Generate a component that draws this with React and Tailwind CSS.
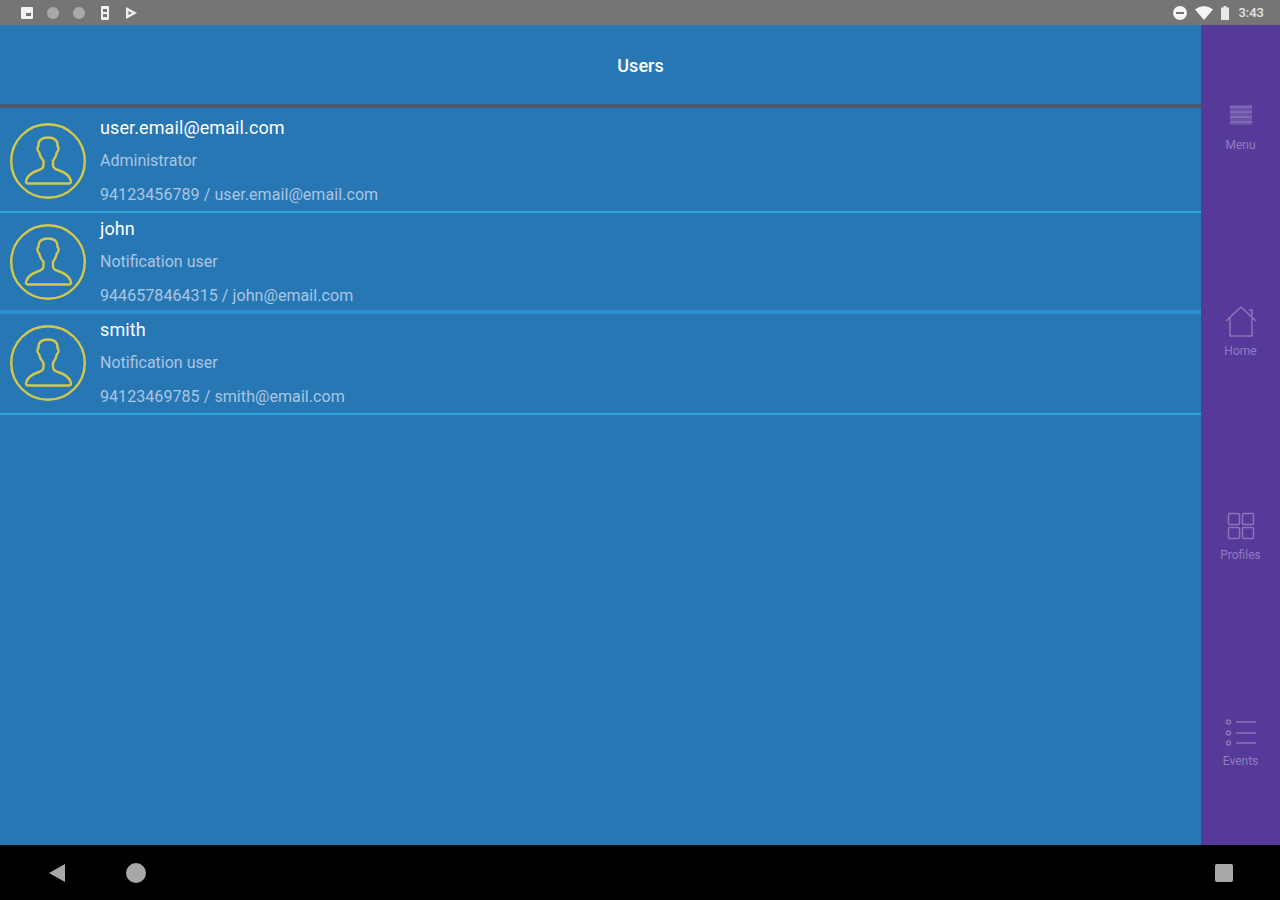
const users = [
  { name: 'user.email@email.com', role: 'Administrator', contact: '94123456789 / user.email@email.com', line: 'border-b-[2px] border-[#2fa3dc]' },
  { name: 'john', role: 'Notification user', contact: '9446578464315 / john@email.com', line: 'border-b-[4px] border-[#2b8fd0]' },
  { name: 'smith', role: 'Notification user', contact: '94123469785 / smith@email.com', line: 'border-b-[2px] border-[#2fa3dc]' },
];

const Avatar = () => (
  <svg width="76" height="78" viewBox="0 0 76 78" fill="none" stroke="#d4c84a" strokeWidth="2.400" className="shrink-0">
    <circle cx="38" cy="39" r="36.800" />
    <path
      d="M18 61.500C16 61.500 15.500 60 16.500 57.500C18 53 23 50 29 48C32 47 33.500 45.500 33.500 43L33.500 39C31 36 29.500 33 29 30C27 29 27 25 28.500 24C28 18 32 15.500 38 15.500C44 15.500 48 18 47.500 24C49 25 49 29 47 30C46.500 33 45 36 43 39L43 43C43 45.500 44.500 47 48 48C54 50 59 53 60.500 57.500C61.500 60 61 61.500 59 61.500Z"
      strokeLinejoin="round"
    />
  </svg>
);

const MenuIcon = () => (
  <svg width="22" height="20" viewBox="0 0 22 20" fill="none">
    <rect width="22" height="20" fill="#6a53a8" />
    <path d="M0 2h22M0 7h22M0 12h22M0 17h22" stroke="#7f6ab3" strokeWidth="2" />
  </svg>
);

const HomeIcon = () => (
  <svg width="32" height="32" viewBox="0 0 32 32" fill="none" stroke="#8a75b8" strokeWidth="1.500">
    <path d="M1 15 16 1l15 14M5 12v18h22V12M24 4h3v6" />
  </svg>
);

const ProfilesIcon = () => (
  <svg width="28" height="28" viewBox="0 0 28 28" fill="none" stroke="#8a75b8" strokeWidth="1.500">
    <rect x="1.500" y="1.500" width="11" height="11" rx="1" />
    <rect x="15.500" y="1.500" width="11" height="11" rx="1" />
    <rect x="1.500" y="15.500" width="11" height="11" rx="1" />
    <rect x="15.500" y="15.500" width="11" height="11" rx="1" />
  </svg>
);

const EventsIcon = () => (
  <svg width="32" height="30" viewBox="0 0 32 30" fill="none" stroke="#8a75b8" strokeWidth="1.500">
    <circle cx="3.500" cy="4" r="2" />
    <circle cx="3.500" cy="15" r="2" />
    <circle cx="3.500" cy="25" r="2" />
    <path d="M11 4h20M11 15h20M11 25h20" />
  </svg>
);

const navItems = [
  { label: 'Menu', icon: <MenuIcon />, box: 'h-[205px] pt-[74px]', gap: 'mt-[6px]' },
  { label: 'Home', icon: <HomeIcon />, box: 'h-[205px] pt-[76px]', gap: 'mt-[5px]' },
  { label: 'Profiles', icon: <ProfilesIcon />, box: 'h-[205px] pt-[75px]', gap: 'mt-[5px]' },
  { label: 'Events', icon: <EventsIcon />, box: 'h-[205px] pt-[77px]', gap: 'mt-[4px]' },
];

export default function App() {
  return (
    <div className="w-[1280px] h-[900px] flex flex-col overflow-hidden bg-black font-['Roboto',sans-serif]">
      {/* status bar */}
      <div className="h-[25px] shrink-0 bg-[#757575] flex items-center justify-between pl-[20px] pr-[16px]">
        <div className="flex items-center gap-[12px]">
          <svg width="14" height="14" viewBox="0 0 14 14"><rect x="1" y="1" width="12" height="12" rx="1" fill="#f2f2f2" /><rect x="6" y="7" width="5" height="3" fill="#757575" /></svg>
          <svg width="14" height="14" viewBox="0 0 14 14"><circle cx="7" cy="7" r="6" fill="#a8a8a8" /></svg>
          <svg width="14" height="14" viewBox="0 0 14 14"><circle cx="7" cy="7" r="6" fill="#a8a8a8" /></svg>
          <svg width="14" height="16" viewBox="0 0 14 16"><rect x="3" y="1" width="8" height="14" rx="1" fill="#f2f2f2" /><rect x="5" y="4" width="4" height="3" fill="#757575" /><rect x="5" y="9" width="4" height="3" fill="#757575" /></svg>
          <svg width="14" height="14" viewBox="0 0 14 14"><path d="M2 1l11 6-11 6z" fill="#eeeeee" /><path d="M4.500 5v4l3.500-2z" fill="#757575" /></svg>
        </div>
        <div className="flex items-center">
          <svg width="16" height="16" viewBox="0 0 16 16"><circle cx="8" cy="8" r="7" fill="#f5f5f5" /><rect x="4" y="7" width="8" height="2" fill="#757575" /></svg>
          <svg width="18" height="14" viewBox="0 0 18 14" className="ml-[7px]"><path d="M0 3.500C5 -1 13 -1 18 3.500L9 14z" fill="#f5f5f5" /></svg>
          <svg width="10" height="14" viewBox="0 0 10 14" className="ml-[7px]"><path d="M3.500 0h3v1.500H9V14H1V1.500h2.500z" fill="#e8e8e8" /></svg>
          <span className="text-[13px] text-[#e4e4e4] font-medium ml-[8px]">3:43</span>
        </div>
      </div>

      <div className="flex-1 flex min-h-0">
        <main className="flex-1 bg-[#2777b5] min-w-0">
          <div className="h-[87px]">
            <div className="h-[79px] pt-[1px] flex items-center justify-center text-[18px] font-medium text-white pl-[80px]">Users</div>
            <div className="h-[4px] bg-[#4a5a70]" />
          </div>
          {users.map((u) => (
            <div key={u.contact} className={`h-[101px] flex ${u.line}`}>
              <div className="w-[100px] pl-[10px] pt-[10px] shrink-0"><Avatar /></div>
              <div className="pt-[5px]">
                <div className="text-[18px] leading-[22px] tracking-[0.1px] text-white">{u.name}</div>
                <div className="text-[16px] leading-[20px] mt-[12px] text-[#a9c6e2]">{u.role}</div>
                <div className="text-[16px] leading-[20px] mt-[14px] tracking-[0.07px] text-[#a9c6e2]">{u.contact}</div>
              </div>
            </div>
          ))}
        </main>

        <aside className="w-[79px] shrink-0 bg-[#553a9a]">
          {navItems.map((item) => (
            <div key={item.label} className={`${item.box} flex flex-col items-center`}>
              <div className="h-[32px] flex items-center justify-center">{item.icon}</div>
              <div className={`text-[12px] leading-[16px] ${item.gap} text-[#8f7cc0]`}>{item.label}</div>
            </div>
          ))}
        </aside>
      </div>

      {/* nav bar */}
      <div className="h-[55px] shrink-0 bg-black flex items-center pl-[48px] pr-[47px]">
        <svg width="18" height="20" viewBox="0 0 18 20"><path d="M17 1v18L1 10z" fill="#a8a8a8" /></svg>
        <div className="w-[20px] h-[20px] rounded-full bg-[#a8a8a8] ml-[60px]" />
        <div className="w-[18px] h-[18px] rounded-[2px] bg-[#a8a8a8] ml-auto" />
      </div>
    </div>
  );
}
